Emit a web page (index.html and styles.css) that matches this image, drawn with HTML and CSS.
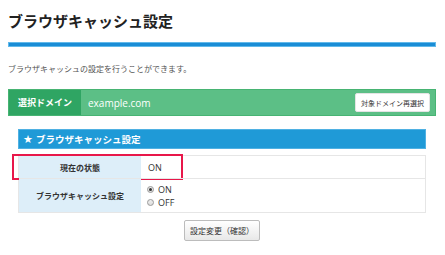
FILE: index.html
```html
<!DOCTYPE html>
<html lang="ja">
<head>
<meta charset="utf-8">
<link rel="stylesheet" href="styles.css">
</head>
<body>
<div class="page">
  <h1 class="title">ブラウザキャッシュ設定</h1>
  <div class="title-bar"></div>
  <p class="desc">ブラウザキャッシュの設定を行うことができます。</p>
  <div class="domain">
    <div class="domain-label">選択ドメイン</div>
    <div class="domain-name">example.com</div>
    <button class="btn-small">対象ドメイン再選択</button>
  </div>
  <div class="section">
    <div class="section-head"><span class="star">★</span>ブラウザキャッシュ設定</div>
    <div class="table">
      <div class="row row-status">
        <div class="th">現在の状態</div>
        <div class="td td-status">ON</div>
        <div class="highlight"></div>
      </div>
      <div class="row row-setting">
        <div class="th">ブラウザキャッシュ設定</div>
        <div class="td td-radios">
          <label class="radio"><span class="dot checked"></span>ON</label>
          <label class="radio"><span class="dot"></span>OFF</label>
        </div>
      </div>
    </div>
    <div class="actions">
      <button class="btn">設定変更（確認）</button>
    </div>
  </div>
</div>
</body>
</html>
```
FILE: styles.css
```css
* { box-sizing: border-box; }
html, body { margin: 0; padding: 0; background: #fff; }
body {
  font-family: "Open Sans", "Noto Sans CJK JP", sans-serif;
  color: #333;
}
.page { padding: 0 9px 0 8px; }
.title {
  margin: 0;
  padding-top: 11px;
  font-size: 15px;
  line-height: 20px;
  font-weight: bold;
  color: #222;
  font-family: "Noto Sans CJK JP", sans-serif;
}
.title-bar {
  margin-top: 11px;
  height: 5px;
  background: #1a8dd6;
  border: 1px solid #62b9ea;
}
.desc {
  margin: 16px 0 0;
  font-size: 8px;
  line-height: 12px;
  color: #555;
  font-family: "Noto Sans CJK JP", sans-serif;
}
.domain {
  margin-top: 14px;
  height: 27px;
  display: flex;
  align-items: center;
  background: #5cbf86;
  border: 1px solid #47b473;
}
.domain-label {
  align-self: stretch;
  width: 72px;
  display: flex;
  align-items: center;
  justify-content: center;
  background: #2fa563;
  color: #fff;
  font-weight: bold;
  font-size: 9px;
  font-family: "Noto Sans CJK JP", sans-serif;
}
.domain-name {
  flex: 1;
  padding-left: 7px;
  color: #fff;
  font-size: 10px;
}
.btn-small {
  margin-right: 5px;
  height: 19px;
  padding: 0 5px;
  background: #fff;
  border: 1px solid #e4e4e4;
  border-radius: 2px;
  font-size: 7px;
  color: #333;
  font-family: "Noto Sans CJK JP", sans-serif;
}
.section { margin: 13px 10px 0; }
.section-head {
  height: 20px;
  display: flex;
  align-items: center;
  padding-left: 4px;
  background: #1f9ad7;
  border: 1px solid #4fb1e3;
  color: #fff;
  font-weight: bold;
  font-size: 9.5px;
  font-family: "Noto Sans CJK JP", sans-serif;
}
.star { font-size: 11px; margin-right: 3px; font-family: "DejaVu Sans", sans-serif; }
.table {
  margin-top: 6px;
  border: 1px solid #e6e6e6;
}
.row { display: flex; position: relative; }
.row + .row { border-top: 1px solid #e6e6e6; }
.row-status { height: 22px; }
.row-setting { height: 34px; }
.th {
  width: 122px;
  display: flex;
  align-items: center;
  justify-content: center;
  background: #ddeef9;
  font-size: 8px;
  font-weight: bold;
  color: #333;
  font-family: "Noto Sans CJK JP", sans-serif;
}
.td {
  flex: 1;
  display: flex;
  align-items: center;
  padding-left: 7px;
  font-size: 9px;
  color: #333;
}
.td-radios {
  flex-direction: column;
  align-items: flex-start;
  justify-content: center;
  gap: 1px;
  padding-left: 6px;
}
.radio {
  display: flex;
  align-items: center;
  height: 12px;
  font-size: 9px;
}
.dot {
  width: 7px;
  height: 7px;
  margin-right: 4px;
  border-radius: 50%;
  border: 1px solid #999;
  background: linear-gradient(#eee, #ddd);
  position: relative;
}
.dot.checked::after {
  content: "";
  position: absolute;
  left: 1px;
  top: 1px;
  width: 3px;
  height: 3px;
  border-radius: 50%;
  background: #333;
}
.highlight {
  position: absolute;
  left: -7px;
  top: -2px;
  width: 171px;
  height: 26px;
  border: 2px solid #e8174a;
  pointer-events: none;
}
.actions {
  display: flex;
  justify-content: center;
  margin-top: 7px;
}
.btn {
  height: 21px;
  padding: 0 5px;
  border: 1px solid #bcbcbc;
  border-radius: 2px;
  background: linear-gradient(#ffffff, #e8e8e8);
  font-size: 8px;
  color: #333;
  font-family: "Noto Sans CJK JP", sans-serif;
}
```
